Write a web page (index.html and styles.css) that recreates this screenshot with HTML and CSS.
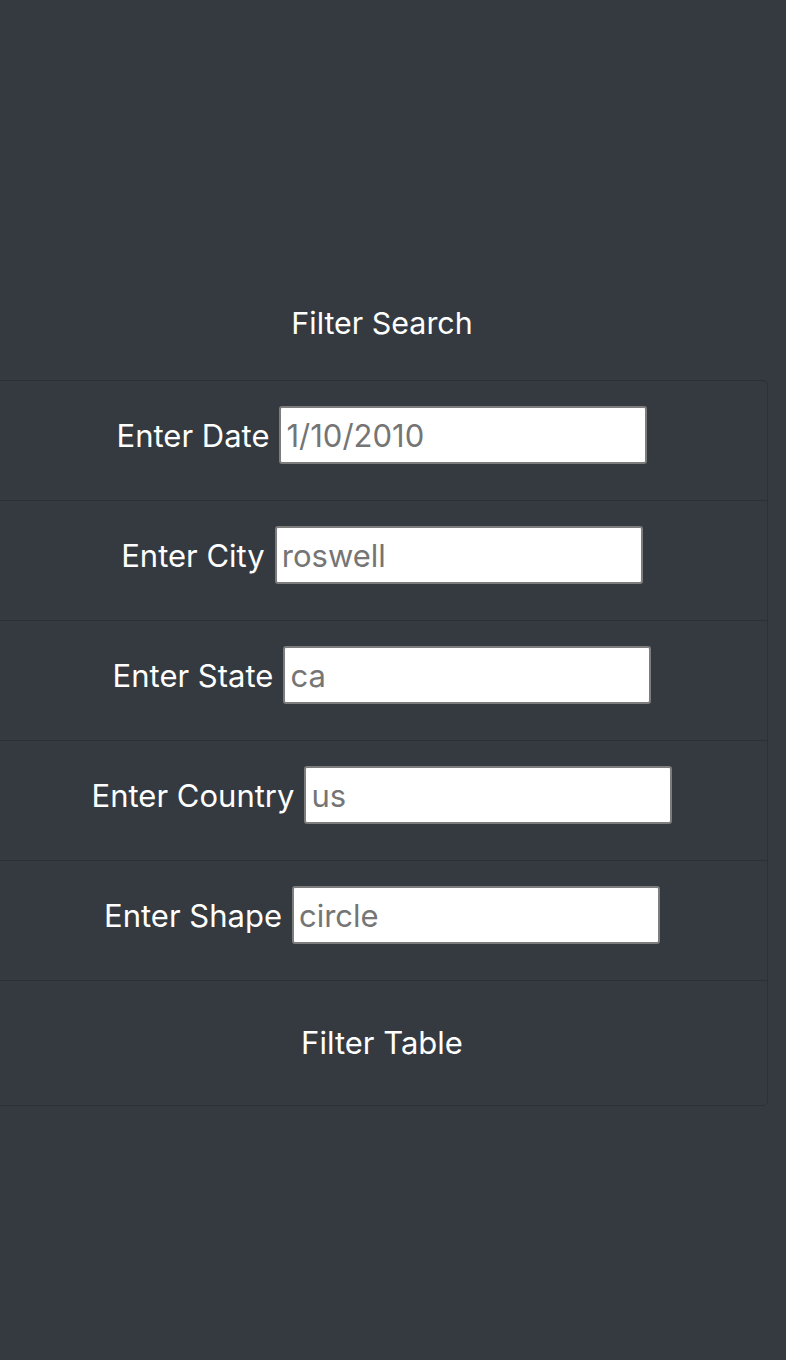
FILE: index.html
```html
<!DOCTYPE html>
<html>
<head>
<meta charset="utf-8">
<link rel="stylesheet" href="styles.css">
</head>
<body>
<div class="page">
  <h2 class="title">Filter Search</h2>
  <ul class="filters">
    <li class="row">
      <label class="label" for="date">Enter Date</label>
      <input class="field" id="date" type="text" placeholder="1/10/2010">
    </li>
    <li class="row">
      <label class="label" for="city">Enter City</label>
      <input class="field" id="city" type="text" placeholder="roswell">
    </li>
    <li class="row">
      <label class="label" for="state">Enter State</label>
      <input class="field" id="state" type="text" placeholder="ca">
    </li>
    <li class="row">
      <label class="label" for="country">Enter Country</label>
      <input class="field" id="country" type="text" placeholder="us">
    </li>
    <li class="row">
      <label class="label" for="shape">Enter Shape</label>
      <input class="field" id="shape" type="text" placeholder="circle">
    </li>
    <li class="row row-button">
      <button class="btn" type="button">Filter Table</button>
    </li>
  </ul>
</div>
</body>
</html>
```
FILE: styles.css
```css
html, body {
  margin: 0;
  padding: 0;
  background: #343a40;
}
body {
  font-family: Inter, "Noto Sans", "Liberation Sans", sans-serif;
  color: #fff;
  height: 1360px;
  overflow: hidden;
}
.page {
  padding-top: 300px;
  margin-left: -4px;
  width: 772px;
}
.title {
  margin: 0;
  font-weight: 400;
  font-size: 30.4px;
  line-height: 46px;
  height: 80px;
  text-align: center;
  box-sizing: border-box;
}
.filters {
  list-style: none;
  margin: 0;
  padding: 0;
  border: 1px solid #2c3136;
  border-radius: 5px;
}
.row {
  display: flex;
  justify-content: center;
  align-items: baseline;
  gap: 10px;
  height: 120px;
  box-sizing: border-box;
  padding-top: 25px;
  border-bottom: 1px solid #2c3136;
}
.label {
  font-size: 31px;
}
.field {
  width: 368px;
  height: 58px;
  box-sizing: border-box;
  border: 2px solid #7d7d7d;
  border-radius: 3px;
  background: #fff;
  padding: 0 5px;
  font-family: inherit;
  font-size: 31px;
  color: #333;
  outline: none;
}
.field::placeholder {
  color: #757575;
}
.row-button {
  border-bottom: none;
  height: 124px;
  padding-top: 43px;
}
.btn {
  background: none;
  border: none;
  color: #fff;
  font-family: inherit;
  font-size: 31px;
  line-height: 1.2;
  padding: 0;
  cursor: pointer;
}
```
